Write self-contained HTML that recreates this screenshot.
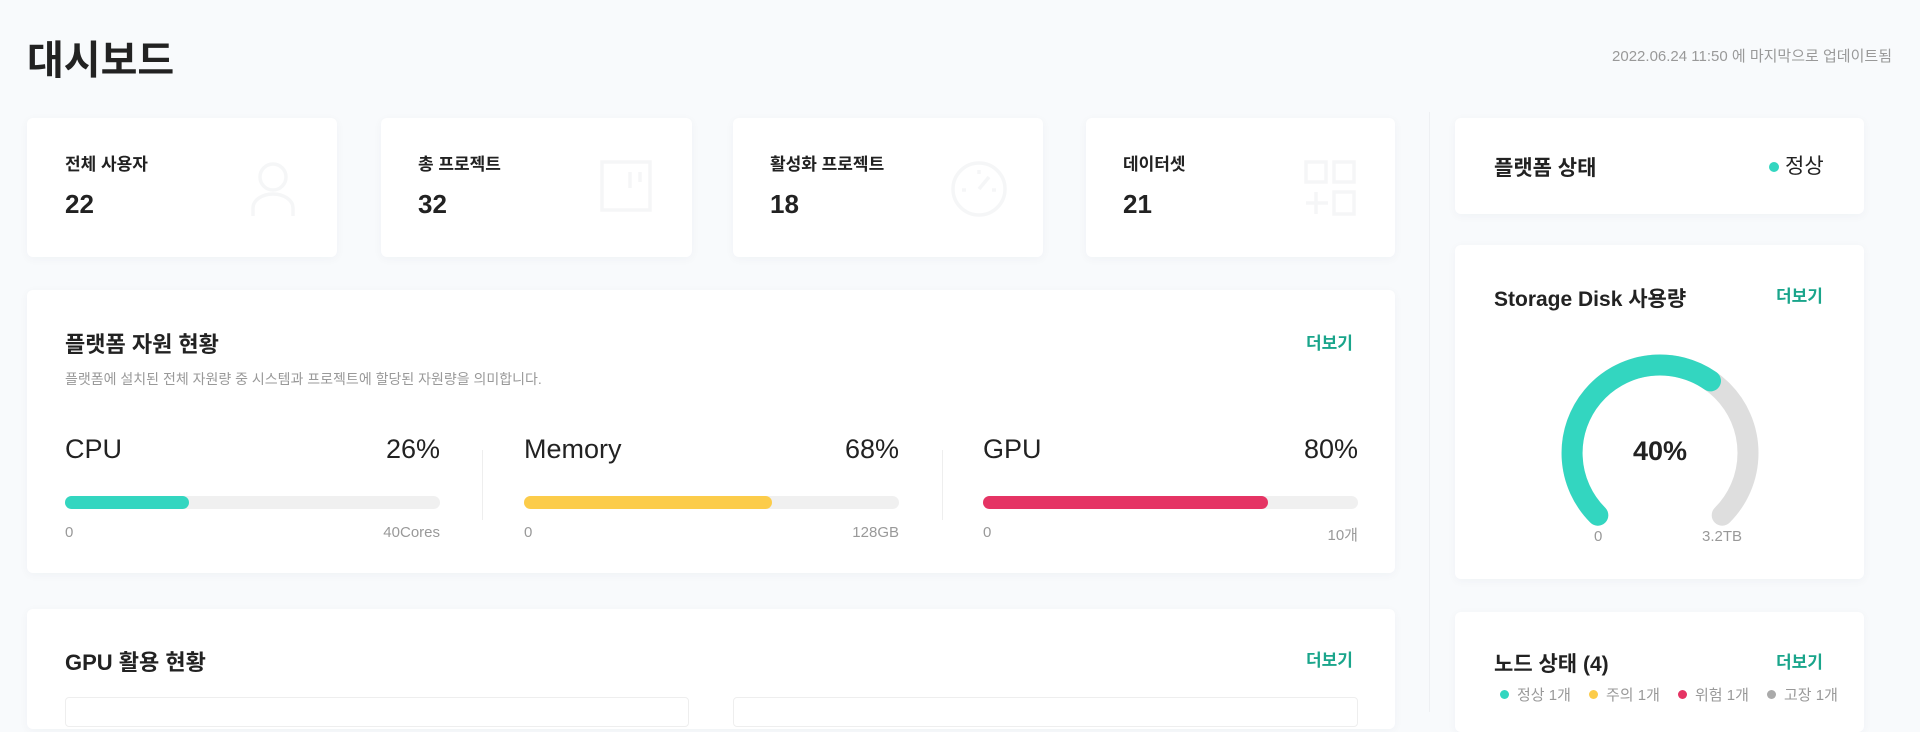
<!DOCTYPE html>
<html><head><meta charset="utf-8"><style>
*{margin:0;padding:0;box-sizing:border-box}
body{width:1920px;height:712px;overflow:hidden;background:#f8fafc;font-family:"Liberation Sans","Noto Sans CJK KR",sans-serif;color:#222;position:relative}
.a{position:absolute}
.card{position:absolute;background:#fff;border-radius:6px;box-shadow:0 2px 10px rgba(30,40,80,0.04)}
.lbl{position:absolute;font-size:17px;font-weight:700;color:#222}
.num{position:absolute;font-size:26px;font-weight:700;color:#222}
.more{position:absolute;font-size:17px;font-weight:700;color:#1aa58b}
.h2{position:absolute;font-size:22px;font-weight:700;color:#222}
.res .name{position:absolute;font-size:27px;font-weight:500;top:0;left:0}
.res .pct{position:absolute;font-size:27px;font-weight:500;top:0;right:0}
.res .bar{position:absolute;top:62px;left:0;right:0;height:13px;border-radius:7px;background:#f0f0f0}
.res .fill{height:13px;border-radius:7px}
.res .s{position:absolute;top:90px;font-size:15px;color:#999}
.leg{position:absolute;font-size:15px;color:#999}
.dot{display:inline-block;width:9px;height:9px;border-radius:50%;margin-right:8px;vertical-align:1px}
</style></head><body>
<div class="a" style="left:27px;top:28px;font-size:40px;font-weight:700;color:#222">대시보드</div>
<div class="a" style="right:28px;top:45px;font-size:15px;color:#999">2022.06.24 11:50 에 마지막으로 업데이트됨</div>

<div class="card" style="left:27px;top:118px;width:310px;height:139px"></div>
<div class="card" style="left:381px;top:118px;width:311px;height:139px"></div>
<div class="card" style="left:733px;top:118px;width:310px;height:139px"></div>
<div class="card" style="left:1086px;top:118px;width:309px;height:139px"></div>
<div class="lbl" style="left:65px;top:150px">전체 사용자</div><div class="num" style="left:65px;top:189px">22</div>
<div class="lbl" style="left:418px;top:150px">총 프로젝트</div><div class="num" style="left:418px;top:189px">32</div>
<div class="lbl" style="left:770px;top:150px">활성화 프로젝트</div><div class="num" style="left:770px;top:189px">18</div>
<div class="lbl" style="left:1123px;top:150px">데이터셋</div><div class="num" style="left:1123px;top:189px">21</div>
<svg class="a" style="left:248px;top:160px" width="50" height="58" fill="none" stroke="#f5f6f7" stroke-width="3.5"><circle cx="25" cy="17" r="13"/><path d="M5 56V48a20 14 0 0 1 40 0v8"/></svg>
<svg class="a" style="left:600px;top:160px" width="52" height="52" fill="none" stroke="#f5f6f7" stroke-width="3.5"><rect x="2" y="2" width="48" height="48"/><path d="M30 12v16M40 12v10"/></svg>
<svg class="a" style="left:950px;top:160px" width="58" height="58" fill="none" stroke="#f5f6f7" stroke-width="3.5"><circle cx="29" cy="29" r="26"/><path d="M29 29l10-12M12 30h4M42 30h4M29 10v4"/></svg>
<svg class="a" style="left:1304px;top:160px" width="54" height="58" fill="none" stroke="#f5f6f7" stroke-width="3.5"><rect x="2" y="2" width="20" height="20"/><rect x="30" y="2" width="20" height="20"/><rect x="30" y="32" width="20" height="22"/><path d="M12 32v22M2 43h22"/></svg>

<div class="card" style="left:27px;top:290px;width:1368px;height:283px"></div>
<div class="h2" style="left:65px;top:327px">플랫폼 자원 현황</div>
<div class="more" style="left:1306px;top:329px">더보기</div>
<div class="a" style="left:65px;top:369px;font-size:14px;color:#999">플랫폼에 설치된 전체 자원량 중 시스템과 프로젝트에 할당된 자원량을 의미합니다.</div>
<div class="a res" style="left:65px;top:434px;width:375px;height:120px"><div class="name">CPU</div><div class="pct">26%</div><div class="bar"><div class="fill" style="width:33%;background:#33d6c0"></div></div><div class="s" style="left:0">0</div><div class="s" style="right:0">40Cores</div></div>
<div class="a res" style="left:524px;top:434px;width:375px;height:120px"><div class="name">Memory</div><div class="pct">68%</div><div class="bar"><div class="fill" style="width:66%;background:#fccc4a"></div></div><div class="s" style="left:0">0</div><div class="s" style="right:0">128GB</div></div>
<div class="a res" style="left:983px;top:434px;width:375px;height:120px"><div class="name">GPU</div><div class="pct">80%</div><div class="bar"><div class="fill" style="width:76%;background:#e53464"></div></div><div class="s" style="left:0">0</div><div class="s" style="right:0">10개</div></div>
<div class="a" style="left:482px;top:450px;width:1px;height:70px;background:#eee"></div>
<div class="a" style="left:942px;top:450px;width:1px;height:70px;background:#eee"></div>

<div class="card" style="left:27px;top:609px;width:1368px;height:120px"></div>
<div class="h2" style="left:65px;top:645px">GPU 활용 현황</div>
<div class="more" style="left:1306px;top:646px">더보기</div>
<div class="a" style="left:65px;top:697px;width:624px;height:30px;border:1px solid #eee;border-radius:4px"></div>
<div class="a" style="left:733px;top:697px;width:625px;height:30px;border:1px solid #eee;border-radius:4px"></div>

<div class="a" style="left:1429px;top:112px;width:1px;height:600px;background:#eef0f3"></div>

<div class="card" style="left:1455px;top:118px;width:409px;height:96px"></div>
<div class="h2" style="left:1494px;top:152px;font-size:21px">플랫폼 상태</div>
<div class="a" style="left:1769px;top:150px;font-size:21px;color:#222"><span class="dot" style="background:#33d6c0;width:10px;height:10px;margin-right:6px"></span>정상</div>

<div class="card" style="left:1455px;top:245px;width:409px;height:334px"></div>
<div class="h2" style="left:1494px;top:283px;font-size:21px">Storage Disk 사용량</div>
<div class="more" style="left:1776px;top:282px">더보기</div>
<svg class="a" style="left:1540px;top:335px" width="240" height="220">
<path d="M57.8 180.2A88 88 0 1 1 182.2 180.2" fill="none" stroke="#dedede" stroke-width="21" stroke-linecap="round"/>
<path d="M57.8 180.2A88 88 0 0 1 170.5 45.9" fill="none" stroke="#33d6c0" stroke-width="21" stroke-linecap="round"/>
</svg>
<div class="a" style="left:1600px;top:436px;width:120px;text-align:center;font-size:27px;font-weight:700;color:#222">40%</div>
<div class="a" style="left:1594px;top:528px;font-size:15px;color:#999">0</div>
<div class="a" style="left:1702px;top:528px;font-size:15px;color:#999">3.2TB</div>

<div class="card" style="left:1455px;top:612px;width:409px;height:120px"></div>
<div class="h2" style="left:1494px;top:648px;font-size:21px">노드 상태 (4)</div>
<div class="more" style="left:1776px;top:648px">더보기</div>
<div class="leg" style="left:1500px;top:684px"><span class="dot" style="background:#33d6c0"></span>정상 1개</div>
<div class="leg" style="left:1589px;top:684px"><span class="dot" style="background:#fccc4a"></span>주의 1개</div>
<div class="leg" style="left:1678px;top:684px"><span class="dot" style="background:#e53464"></span>위험 1개</div>
<div class="leg" style="left:1767px;top:684px"><span class="dot" style="background:#aaa"></span>고장 1개</div>
</body></html>
